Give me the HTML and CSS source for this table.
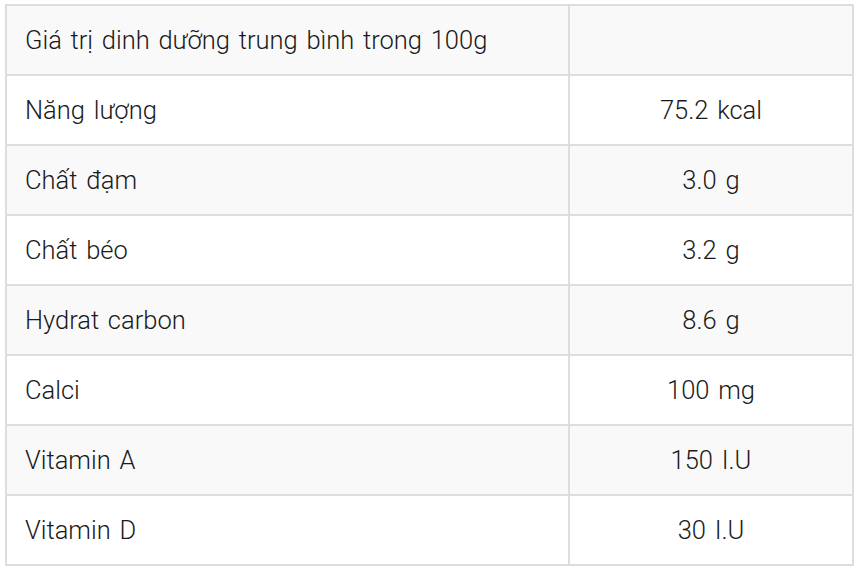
FILE: index.html
```html
<!DOCTYPE html>
<html lang="vi">
<head>
<meta charset="utf-8">
<link rel="stylesheet" href="styles.css">
</head>
<body>
<table class="nutri">
  <tbody>
    <tr><td class="name">Giá trị dinh dưỡng trung bình trong 100g</td><td class="val"></td></tr>
    <tr><td class="name">Năng lượng</td><td class="val">75.2 kcal</td></tr>
    <tr><td class="name">Chất đạm</td><td class="val">3.0 g</td></tr>
    <tr><td class="name">Chất béo</td><td class="val">3.2 g</td></tr>
    <tr><td class="name">Hydrat carbon</td><td class="val">8.6 g</td></tr>
    <tr><td class="name">Calci</td><td class="val">100 mg</td></tr>
    <tr><td class="name">Vitamin A</td><td class="val">150 I.U</td></tr>
    <tr><td class="name">Vitamin D</td><td class="val">30 I.U</td></tr>
  </tbody>
</table>
</body>
</html>
```
FILE: styles.css
```css
html, body { margin: 0; padding: 0; background: #fff; }
body { font-family: Roboto, "Noto Sans", sans-serif; color: #1a1a1a; }
.nutri {
  margin: 4px 0 0 5px;
  border-collapse: separate;
  border-spacing: 0;
  border-left: 2px solid #ddd;
  border-top: 2px solid #ddd;
  width: 849px;
  table-layout: fixed;
}
.nutri td {
  height: 68px;
  padding: 0;
  border-right: 2px solid #ddd;
  border-bottom: 2px solid #ddd;
  font-size: 25.5px;
  font-weight: 300;
  word-spacing: 2.5px;
  vertical-align: middle;
  box-sizing: content-box;
}
.nutri tr:nth-child(odd) td { background: #f9f9f9; }
.nutri td.name { width: 543px; padding-left: 18px; }
.nutri td.val { width: 282px; text-align: center; }
```
